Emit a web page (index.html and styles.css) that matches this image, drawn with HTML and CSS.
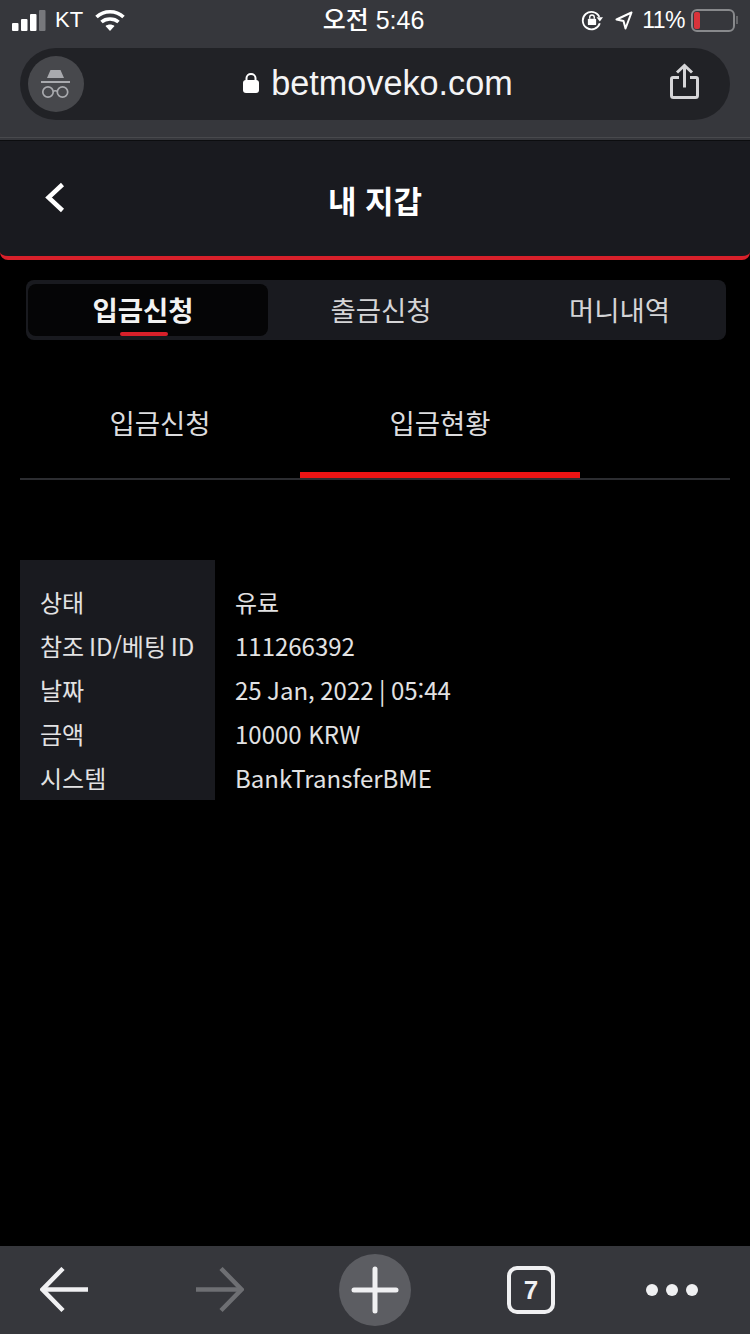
FILE: index.html
```html
<!DOCTYPE html>
<html lang="ko">
<head>
  <meta charset="UTF-8">
  <title>내 지갑</title>
  <link rel="stylesheet" href="styles.css">
</head>
<body>

  <!-- Browser chrome, top -->
  <div class="chrome-top">
    <div class="status">
      <div class="status-left">
        <svg width="34" height="22" viewBox="0 0 34 22">
          <rect x="0" y="14" width="6.500" height="8" rx="1" fill="#fff"/>
          <rect x="9" y="10" width="6.500" height="12" rx="1" fill="#fff"/>
          <rect x="18" y="5" width="6.500" height="17" rx="1" fill="#fff"/>
          <rect x="27" y="1" width="6.500" height="21" rx="1" fill="#77787c"/>
        </svg>
        <span class="carrier">KT</span>
        <svg width="30" height="22" viewBox="0 0 30 22" fill="none" stroke="#fff" stroke-width="3.600">
          <path d="M1.500 8C9 1 21 1 28.500 8"/>
          <path d="M6.500 13C11 9 19 9 23.500 13"/>
          <path d="M15 22L10.500 17C13 15 17 15 19.500 17Z" fill="#fff" stroke="none"/>
        </svg>
      </div>
      <div class="status-time">오전 5:46</div>
      <div class="status-right">
        <svg width="22" height="22" viewBox="0 0 24 24" fill="none">
          <path d="M20 8.500A9.500 9.500 0 1 0 20.500 15.500" stroke="#fff" stroke-width="2"/>
          <path d="M17 9H24L20.500 13.500Z" fill="#fff"/>
          <rect x="7.500" y="10.500" width="9" height="7" rx="1" fill="#fff"/>
          <path d="M9.500 10.500V9A2.500 2.500 0 0 1 14.500 9V10.500" stroke="#fff" stroke-width="1.500"/>
        </svg>
        <svg class="loc" width="18" height="19" viewBox="0 0 18 19" fill="none">
          <path d="M16.500 1.500L1.500 8.500L8.500 10L10.500 17.500Z" stroke="#fff" stroke-width="2" stroke-linejoin="round"/>
        </svg>
        <span class="battery-text">11%</span>
        <div class="battery"><div class="battery-fill"></div></div>
        <div class="battery-tip"></div>
      </div>
    </div>
    <div class="urlbar">
      <div class="incognito">
        <svg width="30" height="30" viewBox="0 0 30 30" fill="none">
          <path d="M6 9L9.500 1H19.500L23 9Z" fill="#a9aaae"/>
          <rect x="0" y="12" width="29" height="2" fill="#a9aaae"/>
          <circle cx="7" cy="23" r="5.200" stroke="#a9aaae" stroke-width="1.700"/>
          <circle cx="21.500" cy="23" r="5.200" stroke="#a9aaae" stroke-width="1.700"/>
          <path d="M12 22.500C13 21.500 15.500 21.500 16.500 22.500" stroke="#a9aaae" stroke-width="1.700"/>
        </svg>
      </div>
      <div class="address">
        <svg width="16" height="20" viewBox="0 0 16 20" fill="none">
          <rect x="0" y="7" width="16" height="13" rx="3" fill="#fff"/>
          <path d="M3.500 8.500V5A4.500 4 0 0 1 12.500 5V8.500" stroke="#fff" stroke-width="2"/>
        </svg>
        <span>betmoveko.com</span>
      </div>
      <svg class="share" width="29" height="36" viewBox="0 0 29 36" fill="none" stroke="#d6d6d8" stroke-width="3">
        <path d="M9 14.500H3A1.500 1.500 0 0 0 1.500 16V32.500A2 2 0 0 0 3.500 34.500H25.500A2 2 0 0 0 27.500 32.500V16A1.500 1.500 0 0 0 26 14.500H20"/>
        <path d="M14.500 24.500V2.500"/>
        <path d="M7 9.500L14.500 2.500L22 9.500"/>
      </svg>
    </div>
  </div>

  <!-- Page header -->
  <div class="header">
    <svg class="back" width="22" height="34" viewBox="0 0 22 34" fill="none" stroke="#fff" stroke-width="4.500">
      <path d="M18.500 2.500L4.500 15.500L18.500 28.500"/>
    </svg>
    <h1>내 지갑</h1>
  </div>

  <!-- Main tabs -->
  <div class="main-tabs">
    <div class="main-tab active"><span>입금신청</span></div>
    <div class="main-tab"><span>출금신청</span></div>
    <div class="main-tab last"><span>머니내역</span></div>
  </div>

  <!-- Sub tabs -->
  <div class="sub-tabs">
    <div class="sub-tab">입금신청</div>
    <div class="sub-tab active">입금현황</div>
  </div>

  <!-- Deposit detail -->
  <div class="detail">
    <div class="detail-labels">
      <div>상태</div>
      <div class="tight-id">참조 ID/베팅 ID</div>
      <div>날짜</div>
      <div>금액</div>
      <div>시스템</div>
    </div>
    <div class="detail-values">
      <div>유료</div>
      <div>111266392</div>
      <div class="tight-date">25 Jan, 2022 | 05:44</div>
      <div>10000 KRW</div>
      <div>BankTransferBME</div>
    </div>
  </div>

  <!-- Browser chrome, bottom -->
  <div class="toolbar">
    <svg width="48" height="46" viewBox="0 0 48 46" fill="none" stroke="#f0f0f2" stroke-width="4.500">
      <path d="M48 22.500H3"/>
      <path d="M23 1.500L2.500 22.500L23 43.500"/>
    </svg>
    <svg class="forward" width="48" height="46" viewBox="0 0 48 46" fill="none" stroke="#6e6f73" stroke-width="4.500">
      <path d="M0 22.500H45"/>
      <path d="M25 1.500L45.500 22.500L25 43.500"/>
    </svg>
    <div class="new-tab">
      <svg width="48" height="48" viewBox="0 0 48 48" fill="none" stroke="#f0f0f2" stroke-width="5" stroke-linecap="round">
        <path d="M24 3V45"/>
        <path d="M3 24H45"/>
      </svg>
    </div>
    <div class="tab-count">7</div>
    <div class="dots"><i></i><i></i><i></i></div>
  </div>

</body>
</html>
```

FILE: styles.css
```css
* {
  box-sizing: border-box;
}
html, body {
  margin: 0;
  padding: 0;
}
body {
  width: 750px;
  height: 1334px;
  background: #000;
  color: #fff;
  font-family: "Noto Sans CJK KR", "Noto Sans", sans-serif;
  display: flex;
  flex-direction: column;
  overflow: hidden;
}
svg {
  display: block;
  flex: none;
}

/* top chrome */
.chrome-top {
  height: 138px;
  margin-bottom: 2px;
  background: #36373c;
  border-bottom: 1px solid #48494d;
  box-shadow: 0 2px 0 #36373c;
  padding: 0 20px;
}
.status {
  height: 40px;
  margin: 0 -20px 8px;
  padding: 0 12px;
  display: flex;
  align-items: center;
  justify-content: space-between;
  font-family: "Liberation Sans", "Noto Sans CJK KR", sans-serif;
}
.status-left {
  width: 220px;
  display: flex;
  align-items: center;
}
.carrier {
  font-size: 22px;
  line-height: 1;
  margin: 0 12px 0 9px;
}
.status-time {
  font-size: 25px;
  line-height: 1;
  font-weight: 500;
  padding-right: 3px;
}
.status-right {
  width: 220px;
  display: flex;
  align-items: center;
  justify-content: flex-end;
}
.loc {
  margin-left: 12px;
}
.battery-text {
  font-size: 23px;
  line-height: 1;
  letter-spacing: -0.5px;
  margin-left: 9px;
  margin-right: 6px;
}
.battery {
  width: 44px;
  height: 23px;
  border: 2px solid #88898c;
  border-radius: 6px;
  padding: 1px;
}
.battery-fill {
  width: 6px;
  height: 100%;
  background: #d9333a;
  border-radius: 2px;
}
.battery-tip {
  width: 2px;
  height: 8px;
  margin-left: 1px;
  background: #66676a;
}
.urlbar {
  height: 72px;
  background: #212226;
  border-radius: 36px;
  padding: 0 31px 0 8px;
  display: flex;
  align-items: center;
}
.incognito {
  width: 56px;
  height: 56px;
  border-radius: 50%;
  background: #47484c;
  display: flex;
  align-items: center;
  justify-content: center;
}
.address {
  flex: 1;
  display: flex;
  align-items: center;
  justify-content: center;
  gap: 12px;
  font-family: "Liberation Sans", sans-serif;
  font-size: 34.200px;
  line-height: 1;
  color: #f4f4f5;
  padding-bottom: 2px;
  padding-left: 2px;
}
.share {
  margin-bottom: 6px;
}

/* page header */
.header {
  height: 120px;
  position: relative;
  background: #191a1f;
  border-top: 1px solid #0c0d0f;
  border-bottom: 4px solid #d8202a;
  border-radius: 0 0 8px 8px;
  display: flex;
  align-items: center;
  justify-content: center;
  padding-top: 2px;
}
.header h1 {
  margin: 0;
  font-size: 31px;
  font-weight: 700;
  color: #fff;
}
.back {
  position: absolute;
  left: 44px;
  top: 41px;
}

/* main tabs */
.main-tabs {
  height: 60px;
  margin: 20px 24px 0 26px;
  padding: 4px 0;
  background: #191a1f;
  border-radius: 8px;
  display: flex;
}
.main-tab {
  flex: none;
  width: 226px;
  display: flex;
  align-items: center;
  justify-content: center;
  font-size: 27.500px;
  color: #d4d4d6;
}
.main-tab span {
  padding-bottom: 2px;
}
.main-tab.active {
  width: 240px;
  position: relative;
  background: #050506;
  border-radius: 8px;
  margin-left: 2px;
  padding-right: 10px;
  color: #f2f2f2;
  font-weight: 700;
}
.main-tab.active::after {
  content: "";
  position: absolute;
  left: 92px;
  bottom: 0;
  width: 48px;
  height: 4px;
  border-radius: 2px;
  background: #d8202a;
}
.main-tab.last {
  flex: 1;
  padding-left: 19px;
}

/* sub tabs */
.sub-tabs {
  height: 140px;
  margin: 0 20px;
  border-bottom: 2px solid #2c2d31;
  display: flex;
}
.sub-tab {
  width: 280px;
  display: flex;
  align-items: center;
  justify-content: center;
  font-size: 27.500px;
  color: #dcdcde;
  padding-top: 26px;
}
.sub-tab.active {
  border-bottom: 6px solid #ec1414;
  padding-top: 32px;
}

/* deposit detail */
.detail {
  height: 240px;
  margin: 80px 20px 0;
  display: flex;
  font-size: 24px;
  line-height: 44px;
  color: #e2e2e3;
}
.detail-labels {
  width: 195px;
  background: #191a1f;
  padding: 20px 0 0 20px;
  white-space: nowrap;
}
.detail-values {
  padding: 20px 0 0 20px;
  white-space: nowrap;
}
.tight-id {
  word-spacing: -2px;
}
.tight-date {
  word-spacing: -1.250px;
}

/* bottom chrome */
.toolbar {
  height: 88px;
  margin-top: auto;
  background: #36373c;
  padding-left: 40px;
  display: flex;
  align-items: center;
}
.forward {
  margin-left: 108px;
}
.new-tab {
  width: 72px;
  height: 72px;
  margin-left: 95px;
  border-radius: 50%;
  background: #5c5d62;
  display: flex;
  align-items: center;
  justify-content: center;
}
.tab-count {
  width: 48px;
  height: 48px;
  margin-left: 96px;
  border: 4px solid #f0f0f2;
  border-radius: 10px;
  display: flex;
  align-items: center;
  justify-content: center;
  font-family: "Liberation Sans", sans-serif;
  font-size: 26px;
  font-weight: 700;
  color: #f0f0f2;
}
.dots {
  margin-left: 91px;
  display: flex;
  gap: 8px;
}
.dots i {
  width: 12px;
  height: 12px;
  border-radius: 50%;
  background: #f0f0f2;
}
```
